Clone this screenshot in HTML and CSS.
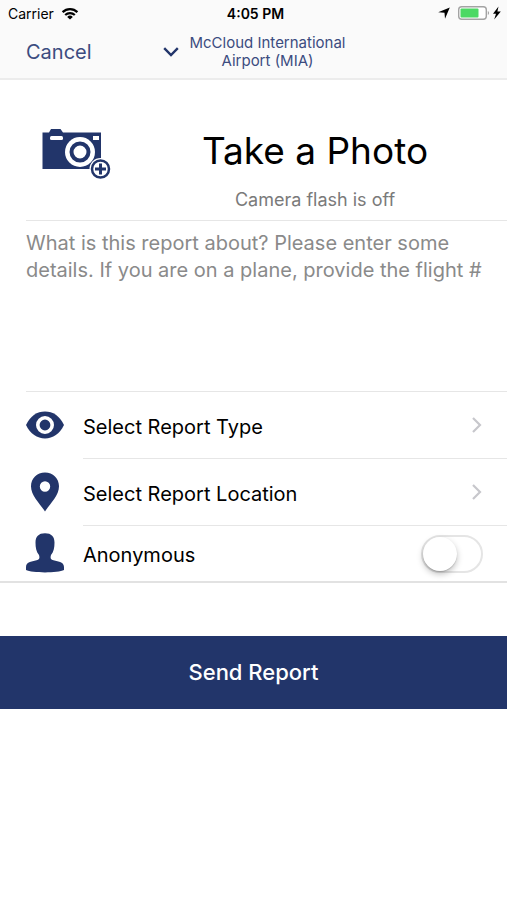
FILE: index.html
```html
<!DOCTYPE html>
<html lang="en">
<head>
<meta charset="utf-8">
<meta name="viewport" content="width=device-width, initial-scale=1">
<title>New Report</title>
<link rel="stylesheet" href="styles.css">
</head>
<body>
<header class="top">
  <div class="status">
    <div class="carrier">
      <span>Carrier</span>
      <svg width="18" height="13" viewBox="0 0 18 13" aria-hidden="true">
        <path d="M1.6 5.1a10.6 10.6 0 0 1 14.8 0" fill="none" stroke="#000" stroke-width="2.3"/>
        <path d="M4.2 8a6.9 6.9 0 0 1 9.6 0" fill="none" stroke="#000" stroke-width="2.2"/>
        <path d="M9 12.6 6.2 9.9a4.1 4.1 0 0 1 5.6 0z"/>
      </svg>
    </div>
    <time class="clock">4:05 PM</time>
    <div class="indicators">
      <svg width="12" height="12" viewBox="0 0 12 12" aria-hidden="true"><path d="M11.8.4 7 11.8 6.5 5.8.2 5.3z"/></svg>
      <svg width="46" height="16" viewBox="0 0 46 16" aria-hidden="true">
        <rect x="1.7" y="1.7" width="27.6" height="12.6" rx="3" fill="#fff" stroke="#a3a3a3" stroke-width="1.4"/>
        <rect x="3.5" y="3.5" width="18" height="9" rx="1" fill="#4cd964"/>
        <path d="M30.8 6a2.2 2.2 0 0 1 0 4z" fill="#a3a3a3"/>
        <path d="m41.500 1.500-5.500 7.300h3L37.200 14.500l6.600-8h-3.400z"/>
      </svg>
    </div>
  </div>
  <nav class="nav">
    <button type="button" class="cancel">Cancel</button>
    <button type="button" class="place">
      <svg width="18" height="12" viewBox="0 0 18 12" aria-hidden="true"><path d="m2.2 2.2 6.8 6.8 6.8-6.8" fill="none" stroke="#22356a" stroke-width="2.4"/></svg>
      <span>McCloud International<br>Airport (MIA)</span>
    </button>
  </nav>
</header>
<main>
  <form>
    <button type="button" class="photo">
      <svg class="camera" width="70" height="52" viewBox="0 0 70 52" aria-hidden="true">
        <path d="M1.500 4.500H8L10 1h9.500l2.500 3.500h38V41H1.500z" fill="#22356a"/>
        <rect x="9" y="8" width="13" height="4" rx="1.500" fill="#fff"/>
        <rect x="52" y="8" width="6" height="4" fill="#fff"/>
        <circle cx="39" cy="24" r="15" fill="#fff"/>
        <circle cx="39" cy="24" r="8.500" fill="#fff" stroke="#22356a" stroke-width="4"/>
        <circle cx="59.500" cy="41" r="11" fill="#fff"/>
        <circle cx="59.500" cy="41" r="8.500" fill="#fff" stroke="#22356a" stroke-width="2.500"/>
        <path d="M59.500 35.500v11M54 41h11" stroke="#22356a" stroke-width="3"/>
      </svg>
      <span class="photo-text">
        <span class="photo-title">Take a Photo</span>
        <span class="photo-note">Camera flash is off</span>
      </span>
    </button>
    <textarea class="details" aria-label="Report details" placeholder="What is this report about? Please enter some details. If you are on a plane, provide the flight #"></textarea>
    <div class="rows">
      <button type="button" class="row">
        <svg width="38" height="28" viewBox="0 0 38 28" aria-hidden="true">
          <path d="M0 14C4.500 5 11 .6 19 .6S33.500 5 38 14C33.500 23 27 27.400 19 27.400S4.500 23 0 14z" fill="#22356a"/>
          <circle cx="19" cy="14" r="7.200" fill="#22356a" stroke="#fff" stroke-width="3.600"/>
        </svg>
        <span class="label"><span class="name">Select Report Type</span>
          <svg width="12" height="18" viewBox="0 0 12 18" aria-hidden="true"><path d="m2 2 7 7-7 7" fill="none" stroke="#c7c7cc" stroke-width="2.200"/></svg>
        </span>
      </button>
      <button type="button" class="row">
        <svg width="38" height="40" viewBox="0 0 38 40" aria-hidden="true">
          <path fill-rule="evenodd" d="M19 .5C11 .5 5 6.500 5 14.300 5 24 14 31.500 19 39.500 24 31.500 33 24 33 14.300 33 6.500 27 .5 19 .5zm0 8.800a5.200 5.200 0 1 1 0 10.400 5.200 5.200 0 0 1 0-10.400z" fill="#22356a"/>
        </svg>
        <span class="label"><span class="name">Select Report Location</span>
          <svg width="12" height="18" viewBox="0 0 12 18" aria-hidden="true"><path d="m2 2 7 7-7 7" fill="none" stroke="#c7c7cc" stroke-width="2.200"/></svg>
        </span>
      </button>
      <label class="row row-switch">
        <svg width="38" height="40" viewBox="0 0 38 40" aria-hidden="true">
          <path d="M19 .3C12.500.3 9.500 3.700 9.500 9.500c0 5 .8 9.500 3.500 12.500.8 2.500.5 4-1.500 5C6.500 28.700 0 28.500 0 34v3c6 3.200 32 3.200 38 0v-3c0-5.500-6.500-5.300-11.500-7-2-1-2.300-2.500-1.500-5 2.700-3 3.500-7.500 3.500-12.500C28.500 3.700 25.500.3 19 .3z" fill="#22356a"/>
        </svg>
        <span class="label"><span class="name">Anonymous</span>
          <input type="checkbox" role="switch" class="switch">
        </span>
      </label>
    </div>
    <button type="submit" class="send">Send Report</button>
  </form>
</main>
</body>
</html>
```
FILE: styles.css
```css
* {
  box-sizing: border-box;
}

body {
  margin: 0;
  background: #fff;
  color: #000;
  font-family: Inter, "Liberation Sans", sans-serif;
}

button {
  margin: 0;
  padding: 0;
  border: 0;
  background: none;
  color: inherit;
  font: inherit;
  cursor: pointer;
}

svg {
  display: block;
  flex: none;
}

.top {
  background: #fafafa;
  border-bottom: 2px solid #ececec;
}

.status {
  display: grid;
  grid-template-columns: 1fr auto 1fr;
  align-items: center;
  height: 26px;
  padding: 0 4px 0 8px;
  font-size: 14px;
}

.carrier,
.indicators {
  display: flex;
  align-items: center;
  gap: 7px;
}

.indicators {
  justify-content: flex-end;
}

.clock {
  font-weight: 600;
}

.nav {
  display: grid;
  grid-template-columns: 1fr auto 1fr;
  align-items: center;
  height: 52px;
  padding: 0 26px;
  color: #3c4c80;
}

.cancel {
  justify-self: start;
  font-size: 20px;
}

.place {
  display: flex;
  align-items: center;
  gap: 10px;
  font-size: 15px;
  line-height: 18px;
}

.photo {
  display: flex;
  align-items: center;
  width: 100%;
  height: 140px;
  padding: 48px 0 10px 41px;
}

.camera {
  align-self: flex-start;
}

.photo-text {
  display: flex;
  flex: 1;
  flex-direction: column;
  align-items: center;
  gap: 16px;
  padding-left: 12px;
}

.photo-title {
  font-size: 37px;
  line-height: 46px;
}

.photo-note {
  color: #7a7a7a;
  font-size: 18px;
  line-height: 20px;
}

.details {
  display: block;
  width: calc(100% - 26px);
  height: 171px;
  margin-left: 26px;
  padding: 9px 16px 0 0;
  border: 0;
  border-top: 1px solid #e6e6e6;
  outline: 0;
  resize: none;
  background: none;
  font: 20px/27px Inter, "Liberation Sans", sans-serif;
}

.details::placeholder {
  color: #8a8a8a;
  opacity: 1;
}

.rows {
  border-bottom: 2px solid #e2e2e2;
}

.row {
  display: flex;
  align-items: center;
  gap: 19px;
  width: 100%;
  height: 67px;
  padding-left: 26px;
  font-size: 20px;
  text-align: left;
}

.row-switch {
  height: 56px;
}

.label {
  display: flex;
  flex: 1;
  align-items: center;
  justify-content: space-between;
  height: 100%;
  padding-right: 24px;
  border-top: 1px solid #e6e6e6;
}

.name {
  padding-top: 3px;
}

.rows .row:first-child {
  position: relative;
}

.rows .row:first-child::before {
  content: "";
  position: absolute;
  top: 0;
  right: 0;
  left: 26px;
  border-top: 1px solid #e6e6e6;
}

.switch {
  appearance: none;
  width: 62px;
  height: 38px;
  margin: 0;
  border: 2px solid #e5e5e5;
  border-radius: 19px;
  background: #fff;
}

.switch::before {
  content: "";
  display: block;
  width: 34px;
  height: 34px;
  border-radius: 50%;
  background: #fff;
  box-shadow: 0 3px 6px rgba(0, 0, 0, 0.25), 0 1px 1px rgba(0, 0, 0, 0.15);
}

.switch:checked {
  border-color: #4cd964;
  background: #4cd964;
}

.switch:checked::before {
  margin-left: auto;
}

.send {
  display: block;
  width: 100%;
  height: 73px;
  margin-top: 53px;
  padding-bottom: 2px;
  background: #22356a;
  color: #fff;
  font-size: 22px;
  font-weight: 500;
}
```
